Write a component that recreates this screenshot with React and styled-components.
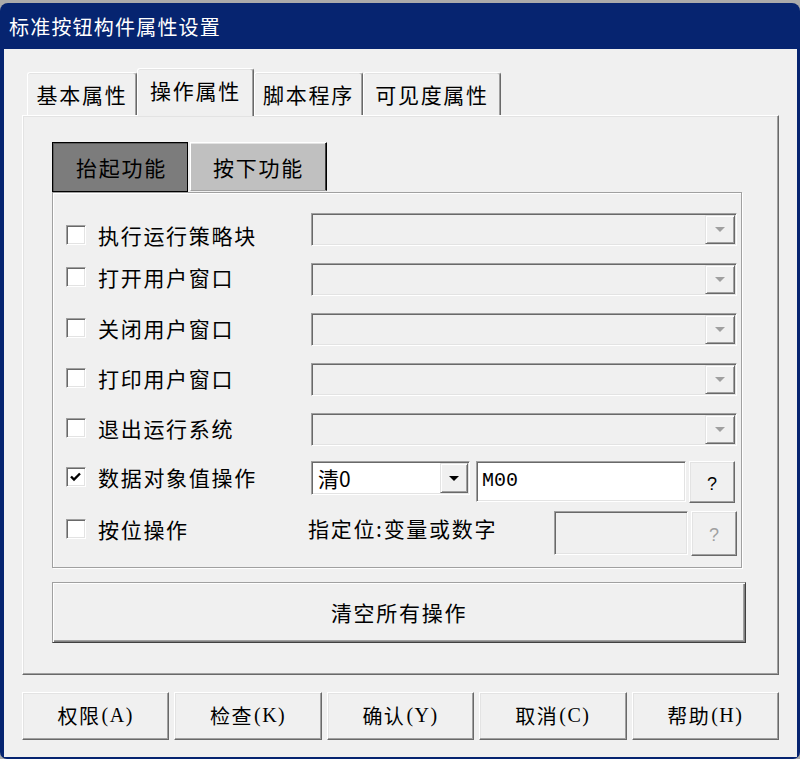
import React from "react";
import styled, { createGlobalStyle } from "styled-components";

const GlobalStyle = createGlobalStyle`
    html, body {
        margin: 0;
        padding: 0;
        background: #ababab;
    }

    body {
        font-family: "Noto Sans CJK SC", "Liberation Sans", sans-serif;
        color: #000;
    }

    * {
        box-sizing: border-box;
    }
`;

const Window = styled.div`
    background: #062470;
    border-radius: 8px 8px 7px 7px;
    display: flex;
    flex-direction: column;
    height: 756px;
    margin-top: 3px;
    padding: 0 3px 2px 4px;
    width: 800px;
`;

const TitleBar = styled.div`
    align-items: center;
    color: #fff;
    display: flex;
    font-size: 20px;
    height: 46px;
    letter-spacing: 1.2px;
    padding-left: 5px;
`;

const Client = styled.div`
    background: #f0f0f0;
    display: flex;
    flex: 1;
    flex-direction: column;
    padding: 19px 18px 17px 18px;
`;

const TabStrip = styled.div`
    align-items: flex-end;
    display: flex;
    height: 47px;
    padding-left: 5px;
    position: relative;
    z-index: 1;
`;

const Tab = styled.div`
    align-items: center;
    background: #f0f0f0;
    border-left: 1px solid #fff;
    border-radius: 3px 3px 0 0;
    border-right: 1px solid #696969;
    border-top: 1px solid #fff;
    box-shadow: inset -1px 0 #a0a0a0, inset 0 1px #e3e3e3;
    display: flex;
    font-size: 21px;
    height: ${(p) => (p.$active ? 48 : 43)}px;
    justify-content: center;
    letter-spacing: 1.7px;
    margin-bottom: ${(p) => (p.$active ? -1 : 0)}px;
    padding-bottom: ${(p) => (p.$active ? 5 : 0)}px;
    width: ${(p) => p.$width}px;
`;

const Panel = styled.div`
    border-bottom: 1px solid #696969;
    border-left: 1px solid #fff;
    border-right: 1px solid #696969;
    border-top: 1px solid #fff;
    box-shadow: inset -1px -1px #a0a0a0, inset 1px 1px #e3e3e3;
    display: flex;
    flex-direction: column;
    height: 560px;
    padding: 26px 32px 0 29px;
`;

const SubTabs = styled.div`
    display: flex;
    gap: 2px;
    height: 50px;
`;

const SubTab = styled.div`
    align-items: center;
    background: ${(p) => (p.$pressed ? "#7c7c7c" : "#c0c0c0")};
    border: 1px solid;
    border-color: ${(p) => (p.$pressed ? "#000" : "#fff #000 #a0a0a0 #fff")};
    box-shadow: ${(p) =>
        p.$pressed ? "inset 1px 1px #5a5a5a" : "inset -1px 0 #404040, inset 0 1px #e3e3e3"};
    display: flex;
    font-size: 21px;
    height: ${(p) => (p.$pressed ? 50 : 49)}px;
    justify-content: center;
    letter-spacing: 1.7px;
    padding-left: ${(p) => (p.$pressed ? 3 : 0)}px;
    width: ${(p) => p.$width}px;
`;

const Group = styled.div`
    border: 1px solid #a0a0a0;
    box-shadow: inset 1px 1px #fff, 1px 1px #fff;
    display: flex;
    flex-direction: column;
    height: 376px;
    margin-right: 4px;
    padding: 20px 4px 0 13px;
`;

const Row = styled.div`
    align-items: start;
    display: grid;
    grid-template-columns: 245px 1fr;
    height: ${(p) => p.$height || 50}px;
`;

const CheckCell = styled.div`
    align-items: center;
    display: flex;
    font-size: 21px;
    gap: 12px;
    height: 33px;
    letter-spacing: 1.7px;
    margin-top: ${(p) => p.$shift || 0}px;
`;

const CheckBox = styled.span`
    background: #fff;
    border: 1px solid;
    border-color: #a0a0a0 #fff #fff #a0a0a0;
    box-shadow: inset 1px 1px #696969, inset -1px -1px #e3e3e3;
    display: inline-flex;
    flex-shrink: 0;
    height: 20px;
    width: 20px;

    svg {
        display: block;
    }
`;

const Sunken = styled.div`
    background: ${(p) => (p.$disabled ? "#f0f0f0" : "#fff")};
    border: 1px solid;
    border-color: #a0a0a0 #fff #fff #a0a0a0;
    box-shadow: inset 1px 1px #696969, inset -1px -1px #e3e3e3;
    display: flex;
    height: ${(p) => p.$height}px;
    margin-left: ${(p) => p.$offset || 0}px;
    width: ${(p) => (p.$width ? `${p.$width}px` : "100%")};
`;

const ComboText = styled.div`
    align-items: center;
    display: flex;
    flex: 1;
    font-size: 21px;
    padding-left: 6px;
`;

const DropButton = styled.div`
    align-items: center;
    background: #f0f0f0;
    border: 1px solid;
    border-color: #e3e3e3 #696969 #696969 #e3e3e3;
    box-shadow: inset 1px 1px #fff, inset -1px -1px #a0a0a0;
    display: flex;
    justify-content: center;
    margin: 1px 1px 1px 0;
    width: ${(p) => p.$width || 30}px;
`;

const Arrow = styled.span`
    border-left: 5px solid transparent;
    border-right: 5px solid transparent;
    border-top: 5px solid ${(p) => (p.$disabled ? "#a0a0a0" : "#000")};
    height: 0;
    width: 0;
`;

const EditText = styled.div`
    font-family: "Liberation Mono", monospace;
    font-size: 20px;
    padding: 7px 0 0 5px;
`;

const Controls = styled.div`
    align-items: start;
    display: flex;
    gap: 3px;
    margin-top: ${(p) => p.$shift || 0}px;
`;

const HintLabel = styled.div`
    align-items: center;
    display: flex;
    flex: 1;
    font-size: 21px;
    height: 33px;
    letter-spacing: 1.7px;
    margin-left: -3px;
`;

const HelpButton = styled.div`
    align-items: center;
    background: #f0f0f0;
    border: 1px solid;
    border-color: #fff #696969 #696969 #fff;
    box-shadow: inset -1px -1px #a0a0a0, inset 1px 1px #e3e3e3;
    color: ${(p) => (p.$disabled ? "#a0a0a0" : "#000")};
    display: flex;
    font-family: "Liberation Sans", sans-serif;
    font-size: 18px;
    height: ${(p) => p.$height}px;
    justify-content: center;
    padding-top: 4px;
    width: 46px;
`;

const ClearButton = styled.div`
    align-items: center;
    background: #f0f0f0;
    border: 1px solid;
    border-color: #a0a0a0 #404040 #404040 #a0a0a0;
    box-shadow: inset 1px 1px #fff, inset -1px -1px #808080, inset -2px -2px #a0a0a0;
    display: flex;
    font-size: 21px;
    height: 61px;
    justify-content: center;
    letter-spacing: 1.7px;
    margin-top: 14px;
    padding-bottom: 2px;
`;

const ButtonBar = styled.div`
    display: flex;
    gap: 5px;
    margin-top: 17px;
`;

const DialogButton = styled.div`
    align-items: center;
    background: #f0f0f0;
    border: 1px solid;
    border-color: #fff #696969 #696969 #fff;
    box-shadow: inset -1px -1px #a0a0a0, inset 1px 1px #e3e3e3;
    display: flex;
    flex: 1;
    font-size: 20px;
    height: 48px;
    justify-content: center;
    letter-spacing: 1.5px;
    padding-bottom: 2px;
`;

const Mnemonic = styled.span`
    font-family: "Liberation Serif", serif;
    font-size: 20px;
    letter-spacing: 1.5px;
    margin-left: 1px;
`;

const tabs = [
    { label: "基本属性", width: 110 },
    { label: "操作属性", width: 117, active: true },
    { label: "脚本程序", width: 109 },
    { label: "可见度属性", width: 138 }
];

const actions = [
    { label: "执行运行策略块", shift: 5 },
    { label: "打开用户窗口", shift: -3 },
    { label: "关闭用户窗口", shift: -2 },
    { label: "打印用户窗口", shift: -2 },
    { label: "退出运行系统", shift: -2 }
];

const buttons = [
    { label: "权限", key: "(A)" },
    { label: "检查", key: "(K)" },
    { label: "确认", key: "(Y)" },
    { label: "取消", key: "(C)" },
    { label: "帮助", key: "(H)" }
];

const Check = ({ checked, label, shift }) => (
    <CheckCell $shift={shift}>
        <CheckBox>
            {checked && (
                <svg width="18" height="18" viewBox="0 0 18 18">
                    <path d="M4 8.5 L7 11.5 L13 5.5" fill="none" stroke="#000" strokeWidth="2.4" />
                </svg>
            )}
        </CheckBox>
        <span>{label}</span>
    </CheckCell>
);

const ComboBox = ({ value, disabled, width, height = 33, buttonWidth }) => (
    <Sunken $disabled={disabled} $width={width} $height={height}>
        <ComboText>{value}</ComboText>
        <DropButton $width={buttonWidth}>
            <Arrow $disabled={disabled} />
        </DropButton>
    </Sunken>
);

export default function App() {
    return (
        <>
            <GlobalStyle />
            <Window>
                <TitleBar>标准按钮构件属性设置</TitleBar>
                <Client>
                    <TabStrip>
                        {tabs.map((t) => (
                            <Tab key={t.label} $width={t.width} $active={t.active}>
                                {t.label}
                            </Tab>
                        ))}
                    </TabStrip>
                    <Panel>
                        <SubTabs>
                            <SubTab $pressed $width={136}>
                                抬起功能
                            </SubTab>
                            <SubTab $width={137}>按下功能</SubTab>
                        </SubTabs>
                        <Group>
                            {actions.map((a) => (
                                <Row key={a.label} $height={a.label === "退出运行系统" ? 48 : 50}>
                                    <Check label={a.label} shift={a.shift} />
                                    <ComboBox disabled />
                                </Row>
                            ))}
                            <Row>
                                <Check checked label="数据对象值操作" shift={-1} />
                                <Controls>
                                    <ComboBox value="清0" width={159} height={34} buttonWidth={28} />
                                    <Sunken $width={210} $height={41} $offset={3}>
                                        <EditText>M00</EditText>
                                    </Sunken>
                                    <HelpButton $height={42}>?</HelpButton>
                                </Controls>
                            </Row>
                            <Row>
                                <Check label="按位操作" shift={1} />
                                <Controls>
                                    <HintLabel>指定位:变量或数字</HintLabel>
                                    <Sunken $disabled $width={134} $height={44} />
                                    <HelpButton $disabled $height={45}>
                                        ?
                                    </HelpButton>
                                </Controls>
                            </Row>
                        </Group>
                        <ClearButton>清空所有操作</ClearButton>
                    </Panel>
                    <ButtonBar>
                        {buttons.map((b) => (
                            <DialogButton key={b.key}>
                                {b.label}
                                <Mnemonic>{b.key}</Mnemonic>
                            </DialogButton>
                        ))}
                    </ButtonBar>
                </Client>
            </Window>
        </>
    );
}
